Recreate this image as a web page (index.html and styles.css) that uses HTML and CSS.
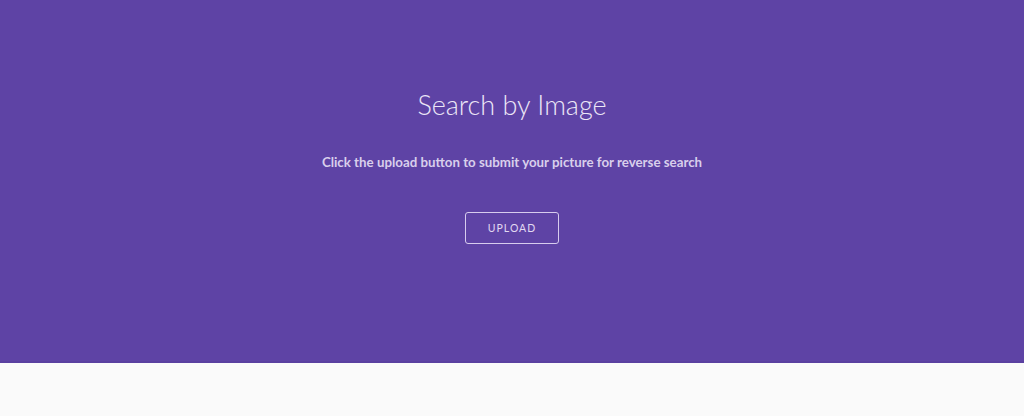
FILE: index.html
```html
<!DOCTYPE html>
<html>
<head>
<meta charset="utf-8">
<link rel="stylesheet" href="styles.css">
</head>
<body>
<section class="hero">
  <h1 class="title">Search by Image</h1>
  <p class="subtitle">Click the upload button to submit your picture for reverse search</p>
  <button class="upload">UPLOAD</button>
</section>
<div class="rest"></div>
</body>
</html>
```
FILE: styles.css
```css
html, body { margin: 0; padding: 0; }
body { background: #fafafa; font-family: Lato, "Open Sans", sans-serif; }
.hero {
  height: 361px;
  background: #5e43a5;
  border-bottom: 2px solid #5a40a0;
  box-shadow: 0 1px 0 #c3b5e0;
  display: flex;
  flex-direction: column;
  align-items: center;
  box-sizing: content-box;
}
.title {
  margin: 88px 0 0;
  font-size: 27px;
  font-weight: 300;
  color: #ece6f7;
  line-height: 34px;
}
.subtitle {
  margin: 31px 0 0;
  font-size: 13.3px;
  font-weight: 700;
  color: #d9cfec;
  line-height: 18px;
}
.upload {
  margin-top: 41px;
  width: 94px;
  height: 32px;
  background: transparent;
  border: 1px solid #d7ccee;
  border-radius: 3px;
  color: #e2d9f2;
  font-family: Lato, sans-serif;
  font-size: 10.5px;
  letter-spacing: 1px;
  padding: 0;
}
```
